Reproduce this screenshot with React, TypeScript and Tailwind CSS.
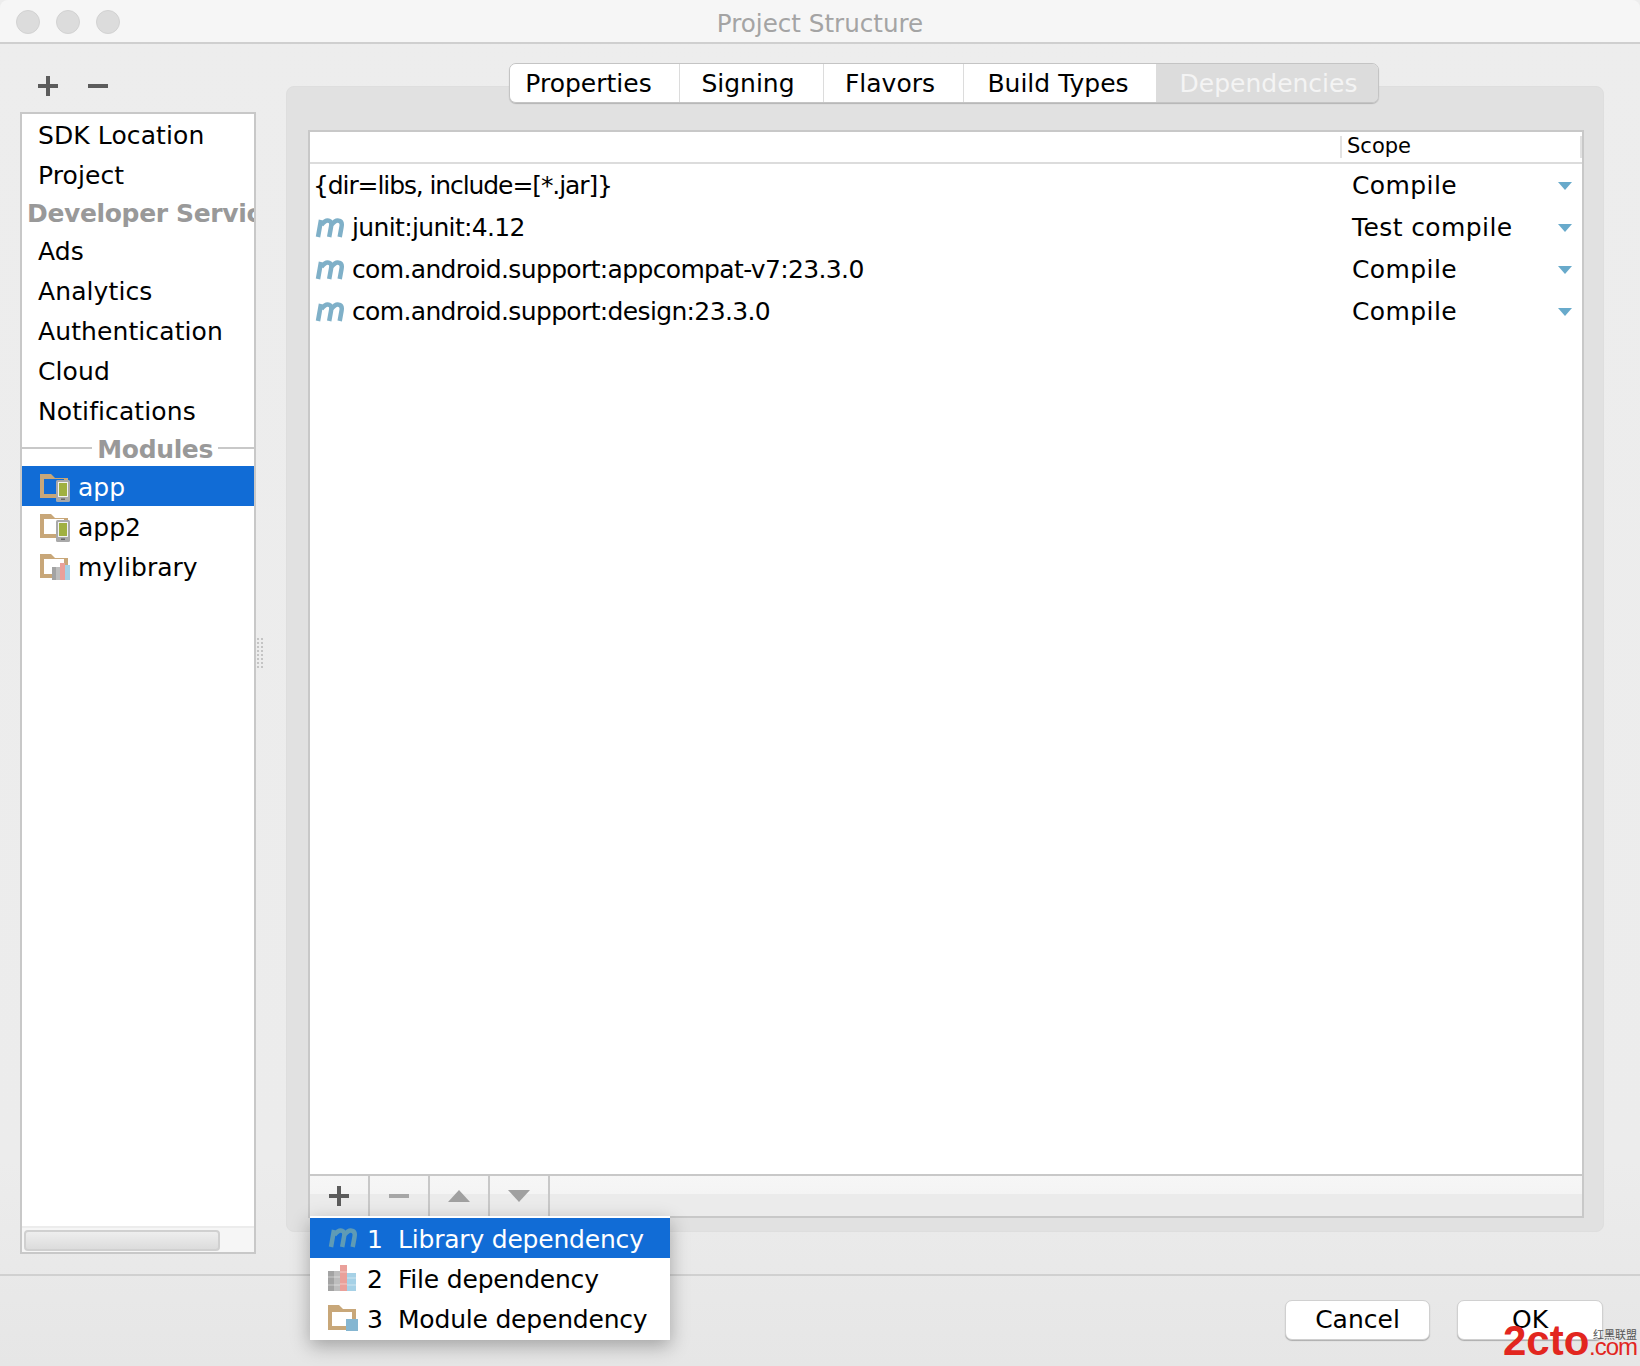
import type { ReactNode } from "react";

const sans = "font-['DejaVu_Sans','Noto_Sans_CJK_SC',sans-serif]";

function MIcon({ className = "text-[#7fb0c8]" }: { className?: string }) {
    return (
        <svg width="30" height="20" viewBox="0 0 30 20" className={`shrink-0 blur-[0.4px] ${className}`}>
            <path
                d="M3 19 L6 2 M6.5 7 Q11 1 14.5 3 Q17 4 16 9 L14.2 19 M16.5 7 Q21 1 24.5 3 Q27.5 4 26.5 9 L24.7 19"
                fill="none"
                stroke="currentColor"
                strokeWidth="4.5"
            />
        </svg>
    );
}

function Books() {
    return (
        <svg width="28" height="26" viewBox="0 0 28 26" className="shrink-0">
            <rect x="0" y="6" width="6" height="20" fill="#a3a3a3" />
            <rect x="6" y="6" width="6" height="20" fill="#bdbdbd" />
            <rect x="12" y="0" width="7" height="26" fill="#eaa09a" />
            <rect x="19" y="8" width="9" height="18" fill="#a6d1e6" />
            <path d="M0 12h12M0 20h12M12 7h7M12 19h7M19 13h9M19 20h9" stroke="#ffffff" strokeOpacity="0.45" />
        </svg>
    );
}

function Folder({ fill = "none", children }: { fill?: string; children?: ReactNode }) {
    return (
        <svg width="32" height="32" viewBox="0 0 32 32" className="shrink-0">
            <path d="M0 4h11l4 4h13v20H0z" fill="#c8a779" />
            <rect x="4" y="9" width="20" height="15" fill={fill} />
            {children}
        </svg>
    );
}

function PhoneBadge() {
    return (
        <>
            <rect x="16" y="10" width="14" height="22" rx="1.5" fill="#a9a9a9" />
            <rect x="18" y="12" width="10" height="15" fill="#f2f2f2" />
            <rect x="19" y="13" width="8" height="13" fill="#a0b040" />
            <rect x="21" y="28.5" width="4" height="1.5" fill="#666" />
        </>
    );
}

function LibBadge() {
    return (
        <>
            <rect x="12" y="17" width="4" height="13" fill="#a3a3a3" />
            <rect x="16" y="17" width="4" height="13" fill="#bdbdbd" />
            <rect x="20" y="13" width="5" height="17" fill="#eaa09a" />
            <rect x="25" y="15" width="5" height="15" fill="#a6d1e6" />
        </>
    );
}

function NavItem({ label }: { label: string }) {
    return <div className="h-[40px] leading-[44px] pl-[16px] tracking-[0.1px] whitespace-nowrap">{label}</div>;
}

function ModuleItem({ label, selected, icon }: { label: string; selected?: boolean; icon: ReactNode }) {
    return (
        <div className={`h-[40px] flex items-center pl-[18px] gap-[6px] ${selected ? "bg-[#116cd6] text-white" : ""}`}>
            <Folder fill={selected ? "#116cd6" : "#ffffff"}>{icon}</Folder>
            <span className="pt-[4px]">{label}</span>
        </div>
    );
}

function DepRow({ name, scope, maven = true }: { name: string; scope: string; maven?: boolean }) {
    return (
        <div className="h-[42px] flex items-center">
            <div className={`flex-1 flex items-center gap-[7px] ${maven ? "pl-[5px]" : "pl-[3px]"}`}>
                {maven && <MIcon />}
                <span className={maven ? "tracking-[-0.65px]" : "tracking-[-1.1px]"}>{name}</span>
            </div>
            <div className="w-[241px] flex items-center justify-between pr-[10px] pl-[11px]">
                <span className="tracking-[0.4px]">{scope}</span>
                <span className="w-0 h-0 border-x-[7px] border-x-transparent border-t-[8px] border-t-[#68aacb]" />
            </div>
        </div>
    );
}

function ToolButton({ children }: { children: ReactNode }) {
    return <div className="w-[60px] h-full flex items-center justify-center border-r-2 border-[#c8c8c8]">{children}</div>;
}

function PlusGlyph({ color }: { color: string }) {
    return (
        <svg width="20" height="20" viewBox="0 0 20 20">
            <path d="M0 10h20M10 0v20" stroke={color} strokeWidth="4" />
        </svg>
    );
}

function MinusGlyph({ color }: { color: string }) {
    return (
        <svg width="20" height="20" viewBox="0 0 20 20">
            <path d="M0 10h20" stroke={color} strokeWidth="4" />
        </svg>
    );
}

function Tab({ label, width, shift, active }: { label: string; width: string; shift: string; active?: boolean }) {
    return (
        <div className={`${width} ${shift} h-full pt-[2px] flex items-center justify-center border-r border-[#dcdcdc] last:border-r-0 ${active ? "bg-[#dcdcdc] text-[#f4f4f4]" : "bg-white"}`}>
            {label}
        </div>
    );
}

function PopupRow({ num, label, icon, selected }: { num: string; label: string; icon: ReactNode; selected?: boolean }) {
    return (
        <div className={`h-[40px] flex items-center ${selected ? "bg-[#116cd6] text-white" : ""}`}>
            <div className="w-[57px] pl-[18px] flex items-center">{icon}</div>
            <span className="w-[31px] pt-[4px]">{num}</span>
            <span className="pt-[4px] tracking-[-0.2px]">{label}</span>
        </div>
    );
}

export default function App() {
    return (
        <div className={`relative w-[1640px] h-[1366px] overflow-hidden flex flex-col bg-[linear-gradient(180deg,#ededed_0%,#ececec_85%,#e6e6e6_100%)] text-[25px] text-black ${sans}`}>
            <header className="h-[44px] shrink-0 relative flex items-center justify-center pt-[6px] bg-[#f6f6f6] border-b-2 border-[#cfcfcf] rounded-t-[8px]">
                <div className="absolute left-[16px] top-[10px] flex gap-[16px]">
                    <span className="size-[24px] rounded-full bg-[#dcdcdc] border border-[#d2d2d2]" />
                    <span className="size-[24px] rounded-full bg-[#dcdcdc] border border-[#d2d2d2]" />
                    <span className="size-[24px] rounded-full bg-[#dcdcdc] border border-[#d2d2d2]" />
                </div>
                <span className="text-[#a4a4a4] text-[24.6px]">Project Structure</span>
            </header>

            <main className="h-[1230px] shrink-0 flex pl-[20px]">
                <aside className="w-[236px] shrink-0 flex flex-col">
                    <div className="h-[68px] flex items-center gap-[30px] pl-[18px] pt-[16px]">
                        <PlusGlyph color="#5c5c5c" />
                        <MinusGlyph color="#5c5c5c" />
                    </div>
                    <div className="h-[1142px] flex flex-col border-2 border-[#c8c8c8] bg-white overflow-hidden">
                        <div className="flex-1">
                            <NavItem label="SDK Location" />
                            <NavItem label="Project" />
                            <div className="h-[36px] leading-[40px] pl-[5px] font-bold tracking-[-0.35px] text-[#999999] whitespace-nowrap">Developer Services</div>
                            <NavItem label="Ads" />
                            <NavItem label="Analytics" />
                            <NavItem label="Authentication" />
                            <NavItem label="Cloud" />
                            <NavItem label="Notifications" />
                            <div className="h-[36px] flex items-center gap-[5px] font-bold tracking-[-0.35px] text-[#999999]">
                                <span className="flex-1 border-t-2 border-[#c8c8c8]" />
                                <span className="pt-[4px]">Modules</span>
                                <span className="w-[36px] border-t-2 border-[#c8c8c8]" />
                            </div>
                            <ModuleItem label="app" selected icon={<PhoneBadge />} />
                            <ModuleItem label="app2" icon={<PhoneBadge />} />
                            <ModuleItem label="mylibrary" icon={<LibBadge />} />
                        </div>
                        <div className="h-[26px] bg-[#f6f6f6] border-t-2 border-[#ececec] pl-[2px] pt-[2px] pb-[1px]">
                            <div className="w-[196px] h-full rounded-[4px] border-2 border-[#d0d0d0] bg-[linear-gradient(180deg,#eeeeee,#dcdcdc)]" />
                        </div>
                    </div>
                </aside>

                <div className="w-[30px] shrink-0 flex justify-start pt-[593px]">
                    <div className="w-[9px] h-[33px] bg-[radial-gradient(circle,#c4c4c4_1px,transparent_1.5px)] bg-[length:4px_4px]" />
                </div>

                <section className="w-[1318px] h-[1146px] mt-[42px] shrink-0 flex flex-col items-center rounded-[8px] bg-[#e1e1e1] border border-[#dedede]">
                    <div className="h-[40px] -mt-[24px] mr-[3px] shrink-0 flex rounded-[7px] overflow-hidden border border-[#c4c4c4] shadow-[0_1px_1px_rgba(0,0,0,0.2)]">
                        <Tab label="Properties" width="w-[170px]" shift="pr-[11px]" />
                        <Tab label="Signing" width="w-[144px]" shift="pr-[6px]" />
                        <Tab label="Flavors" width="w-[140px]" shift="pr-[6px]" />
                        <Tab label="Build Types" width="w-[193px]" shift="pr-[3px]" />
                        <Tab label="Dependencies" width="w-[221px]" shift="pl-[3px]" active />
                    </div>

                    <div className="w-[1276px] h-[1088px] mt-[27px] ml-[2px] shrink-0 flex flex-col border-2 border-[#c8c8c8] bg-white">
                        <div className="h-[32px] shrink-0 flex items-center justify-end border-b-2 border-[#dcdcdc]">
                            <div className="w-[242px] h-[22px] flex items-center pl-[5px] border-l-2 border-r-2 border-[#e2e2e2] text-[21px]">Scope</div>
                        </div>
                        <div className="flex-1 pt-[1px]">
                            <DepRow name="{dir=libs, include=[*.jar]}" scope="Compile" maven={false} />
                            <DepRow name="junit:junit:4.12" scope="Test compile" />
                            <DepRow name="com.android.support:appcompat-v7:23.3.0" scope="Compile" />
                            <DepRow name="com.android.support:design:23.3.0" scope="Compile" />
                        </div>
                        <div className="h-[42px] shrink-0 flex border-t-2 border-[#c8c8c8] bg-[linear-gradient(180deg,#f6f6f6_0%,#f4f4f4_45%,#ebebeb_46%,#ebebeb_100%)]">
                            <ToolButton><PlusGlyph color="#5c5c5c" /></ToolButton>
                            <ToolButton><MinusGlyph color="#a6a6a6" /></ToolButton>
                            <ToolButton>
                                <span className="w-0 h-0 border-x-[11px] border-x-transparent border-b-[12px] border-b-[#a0a0a0]" />
                            </ToolButton>
                            <ToolButton>
                                <span className="w-0 h-0 border-x-[11px] border-x-transparent border-t-[12px] border-t-[#a0a0a0]" />
                            </ToolButton>
                        </div>
                    </div>
                </section>
            </main>

            <footer className="flex-1 flex justify-end items-start gap-[27px] pt-[24px] pr-[37px] border-t-2 border-[#d0d0d0]">
                <button className="w-[145px] h-[40px] rounded-[7px] bg-white border border-[#d0d0d0] shadow-[0_1px_1px_rgba(0,0,0,0.25)]">Cancel</button>
                <button className="w-[146px] h-[40px] rounded-[7px] bg-white border border-[#d0d0d0] shadow-[0_1px_1px_rgba(0,0,0,0.25)]">OK</button>
            </footer>

            {/* dropdown opened from the + button */}
            <div className="absolute left-[310px] top-[1216px] w-[360px] h-[124px] pt-[2px] bg-white shadow-[0_6px_18px_rgba(0,0,0,0.3)]">
                <PopupRow num="1" label="Library dependency" selected icon={<MIcon className="text-[#5f9bb5]" />} />
                <PopupRow num="2" label="File dependency" icon={<Books />} />
                <PopupRow
                    num="3"
                    label="Module dependency"
                    icon={
                        <svg width="32" height="28" viewBox="0 0 32 28">
                            <path d="M0 1h11l4 4h13v21H0z" fill="#c8a779" />
                            <rect x="4" y="8" width="20" height="14" fill="#ffffff" />
                            <rect x="18" y="15" width="12" height="12" fill="#85b6d1" />
                        </svg>
                    }
                />
            </div>

            {/* site watermark */}
            <div className="absolute left-[1503px] top-[1320px] text-[#e2261f] font-['Liberation_Sans',sans-serif] font-bold text-[42px] leading-[42px]">2cto</div>
            <div className="absolute left-[1589px] top-[1335px] text-[#e2261f] font-['Liberation_Sans',sans-serif] text-[24px] leading-[24px] tracking-[-1px]">.com</div>
            <div className="absolute left-[1593px] top-[1328px] text-[#555555] font-['Noto_Sans_CJK_SC',sans-serif] text-[11px] leading-[13px]">红黑联盟</div>
        </div>
    );
}
